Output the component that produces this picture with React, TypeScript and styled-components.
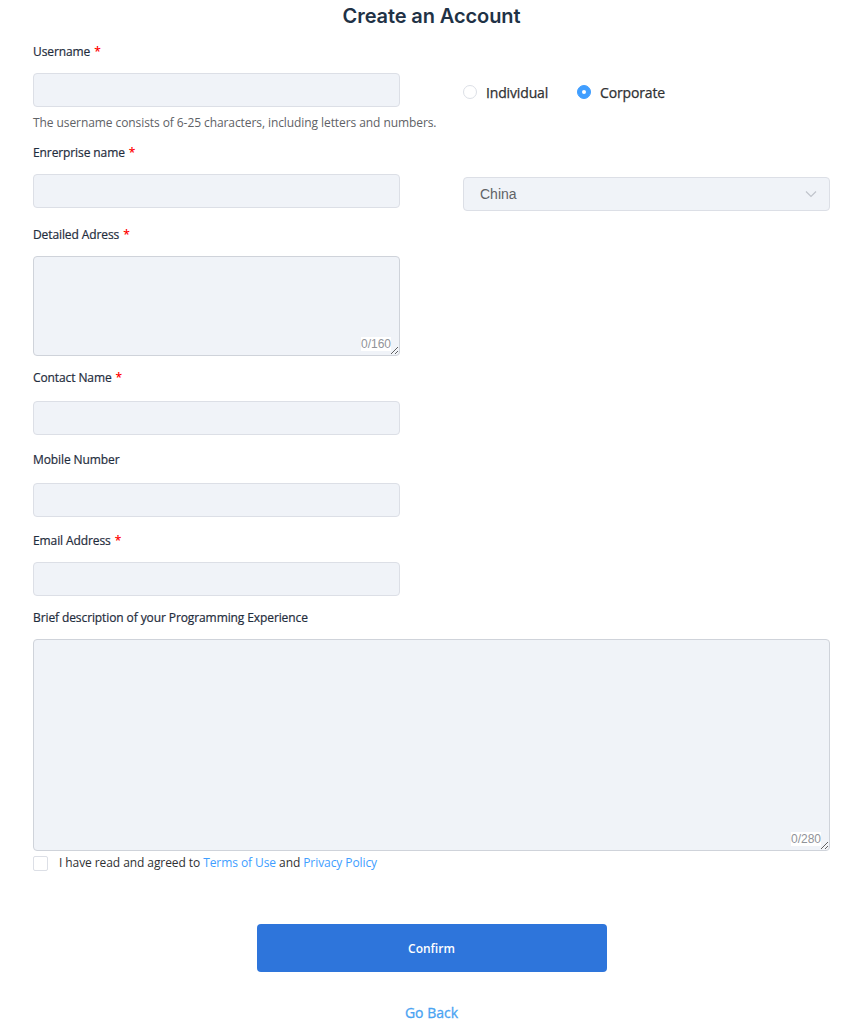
import React from 'react';
import { styled, createGlobalStyle } from 'styled-components';

const GlobalStyle = createGlobalStyle`
  body {
    margin: 0;
    background: #ffffff;
    font-family: "Open Sans", "Liberation Sans", sans-serif;
    color: #1f2d3d;
  }
`;

function ChevronDown() {
  return (
    <svg width="12" height="8" viewBox="0 0 12 8" fill="none">
      <path d="M1 1.5L6 6.5L11 1.5" stroke="#c0c4cc" strokeWidth="1.2" />
    </svg>
  );
}

type ItemProps = {
  label: string;
  required?: boolean;
  space: number;
  labelGap?: number;
  children: React.ReactNode;
};

function FormItem({ label, required, space, labelGap = 12, children }: ItemProps) {
  return (
    <Item $space={space}>
      <Label $gap={labelGap}>
        {label}
        {required && <Star>*</Star>}
      </Label>
      {children}
    </Item>
  );
}

function CountedArea({ max, height }: { max: number; height: number }) {
  return (
    <AreaWrap>
      <TextArea $height={height} />
      <Counter>0/{max}</Counter>
    </AreaWrap>
  );
}

function App() {
  return (
    <Page>
      <GlobalStyle />
      <Title>Create an Account</Title>
      <Form>
        <Row>
          <FormItem label="Username" required space={10}>
            <Input />
            <Hint>The username consists of 6-25 characters, including letters and numbers.</Hint>
          </FormItem>
          <RadioGroup>
            <RadioLabel>
              <RadioDot />
              Individual
            </RadioLabel>
            <RadioLabel>
              <RadioDot $checked />
              Corporate
            </RadioLabel>
          </RadioGroup>
        </Row>
        <Row>
          <FormItem label="Enrerprise name" required space={16}>
            <Input />
          </FormItem>
          <SelectBox>
            <span>China</span>
            <ChevronDown />
          </SelectBox>
        </Row>
        <LeftColumn>
          <FormItem label="Detailed Adress" required space={11}>
            <CountedArea max={160} height={100} />
          </FormItem>
          <FormItem label="Contact Name" required space={14} labelGap={14}>
            <Input />
          </FormItem>
          <FormItem label="Mobile Number" space={13} labelGap={14}>
            <Input />
          </FormItem>
          <FormItem label="Email Address" required space={11}>
            <Input />
          </FormItem>
        </LeftColumn>
        <FormItem label="Brief description of your Programming Experience" space={3}>
          <CountedArea max={280} height={212} />
        </FormItem>
        <Agree>
          <CheckBox />
          <span>
            I have read and agreed to <Link>Terms of Use</Link> and <Link>Privacy Policy</Link>
          </span>
        </Agree>
      </Form>
      <Actions>
        <ConfirmButton>Confirm</ConfirmButton>
        <BackLink>Go Back</BackLink>
      </Actions>
    </Page>
  );
}

const Page = styled.div`
  padding: 0 19px 20px 33px;
  width: 797px;
`;

const Title = styled.h1`
  margin: 0 0 9px;
  font-family: Inter, "Liberation Sans", sans-serif;
  font-size: 20px;
  font-weight: 600;
  line-height: 32px;
  text-align: center;
  color: #1f3246;
  letter-spacing: -0.1px;
`;

const Form = styled.form`
  display: flex;
  flex-direction: column;
`;

const Row = styled.div`
  display: grid;
  grid-template-columns: 367px 367px;
  column-gap: 63px;
`;

const LeftColumn = styled.div`
  width: 367px;
`;

const Item = styled.div<{ $space: number }>`
  display: flex;
  flex-direction: column;
  margin-bottom: ${(p) => p.$space}px;
`;

const Label = styled.label<{ $gap: number }>`
  padding-top: 1px;
  height: 19px;
  font-size: 12px;
  font-weight: 400;
  line-height: 20px;
  margin-bottom: ${(p) => p.$gap}px;
  color: #1f2d3d;
  letter-spacing: -0.1px;
  -webkit-text-stroke: 0.2px #1f2d3d;
`;

const Star = styled.span`
  color: #f00;
  font-weight: 600;
  margin-left: 4px;
  -webkit-text-stroke: 0;
`;

const Input = styled.input`
  box-sizing: border-box;
  height: 34px;
  width: 100%;
  background: #f0f3f8;
  border: 1px solid #dcdfe6;
  border-radius: 4px;
  outline: none;
`;

const Hint = styled.div`
  margin-top: 7px;
  font-size: 12px;
  line-height: 18px;
  color: #606266;
  white-space: nowrap;
  letter-spacing: -0.08px;
`;

const AreaWrap = styled.div`
  position: relative;
  display: flex;
`;

const TextArea = styled.textarea<{ $height: number }>`
  box-sizing: border-box;
  width: 100%;
  height: ${(p) => p.$height}px;
  background: #f0f3f8;
  border: 1px solid #cfd3da;
  border-radius: 4px;
  resize: vertical;
  outline: none;
`;

const Counter = styled.span`
  position: absolute;
  right: 9px;
  bottom: 5px;
  background: #ffffff;
  font-family: "Liberation Sans", Arial, sans-serif;
  font-size: 12px;
  line-height: 14px;
  color: #909399;
`;

const RadioGroup = styled.div`
  display: flex;
  align-items: center;
  gap: 29px;
  padding: 41px 0 0 0;
  height: 20px;
`;

const RadioLabel = styled.label`
  display: flex;
  align-items: center;
  gap: 9px;
  font-size: 14px;
  font-weight: 400;
  color: #303133;
  letter-spacing: -0.15px;
  -webkit-text-stroke: 0.25px #303133;
`;

const RadioDot = styled.span<{ $checked?: boolean }>`
  box-sizing: border-box;
  width: 14px;
  height: 14px;
  border-radius: 50%;
  border: 1px solid ${(p) => (p.$checked ? '#409eff' : '#dcdfe6')};
  background: ${(p) => (p.$checked ? '#409eff' : '#ffffff')};
  display: flex;
  align-items: center;
  justify-content: center;
  &::after {
    content: '';
    width: 4px;
    height: 4px;
    border-radius: 50%;
    background: #ffffff;
    display: ${(p) => (p.$checked ? 'block' : 'none')};
  }
`;

const SelectBox = styled.div`
  box-sizing: border-box;
  margin-top: 35px;
  height: 34px;
  display: flex;
  align-items: center;
  justify-content: space-between;
  padding: 0 12px 0 16px;
  background: #f0f3f8;
  border: 1px solid #dcdfe6;
  border-radius: 4px;
  font-family: "Liberation Sans", Arial, sans-serif;
  font-size: 14px;
  color: #606266;
`;

const Agree = styled.div`
  display: flex;
  align-items: center;
  gap: 11px;
  font-size: 12px;
  line-height: 18px;
  color: #303133;
  letter-spacing: -0.08px;
`;

const CheckBox = styled.span`
  box-sizing: border-box;
  width: 15px;
  height: 15px;
  border: 1px solid #dcdfe6;
  border-radius: 2px;
  background: #ffffff;
`;

const Link = styled.a`
  color: #409eff;
  text-decoration: none;
`;

const Actions = styled.div`
  display: flex;
  flex-direction: column;
  align-items: center;
  margin-top: 52px;
`;

const ConfirmButton = styled.button`
  width: 350px;
  height: 48px;
  border: none;
  border-radius: 4px;
  background: #2e75db;
  color: #ffffff;
  font-family: "Open Sans", sans-serif;
  font-size: 12px;
  font-weight: 600;
`;

const BackLink = styled.a`
  margin-top: 31px;
  font-size: 14px;
  font-weight: 400;
  line-height: 20px;
  color: #4aa3f2;
  -webkit-text-stroke: 0.3px #4aa3f2;
`;

export default App;
